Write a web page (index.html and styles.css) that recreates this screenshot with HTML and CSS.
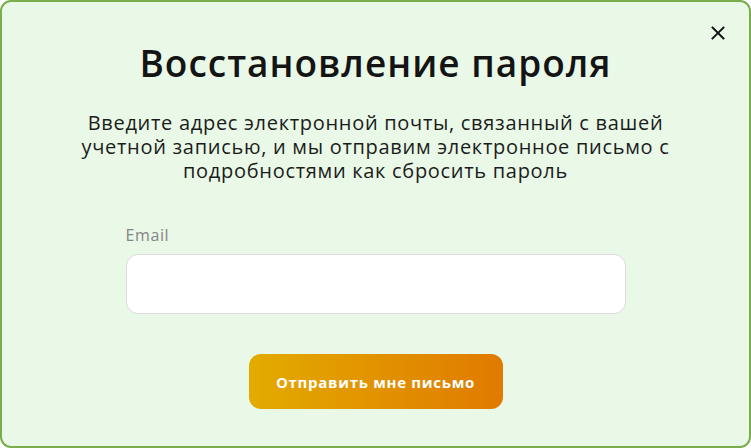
FILE: index.html
```html
<!DOCTYPE html>
<html lang="ru">
<head>
<meta charset="utf-8">
<link rel="stylesheet" href="styles.css">
</head>
<body>
<div class="modal">
  <button class="close" aria-label="Закрыть">
    <svg width="14" height="14" viewBox="0 0 14 14"><path d="M1.5 1.5L12.5 12.5M12.5 1.5L1.5 12.5" stroke="#111" stroke-width="1.9" stroke-linecap="square"/></svg>
  </button>
  <h1 class="title">Восстановление пароля</h1>
  <p class="desc">Введите адрес электронной почты, связанный с вашей учетной записью, и мы отправим электронное письмо с подробностями как сбросить пароль</p>
  <div class="field">
    <label class="label">Email</label>
    <div class="input"></div>
  </div>
  <button class="submit">Отправить мне письмо</button>
</div>
</body>
</html>
```
FILE: styles.css
```css
* { box-sizing: border-box; }
html, body { margin: 0; padding: 0; }
body { font-family: "Open Sans", "Noto Sans", sans-serif; }
.modal {
  position: relative;
  width: 751px;
  height: 448px;
  background: #e9f8e7;
  border: 2px solid #7aad4c;
  border-radius: 11px;
  display: flex;
  flex-direction: column;
  align-items: center;
}
.close {
  position: absolute;
  top: 24px;
  right: 24px;
  padding: 0;
  border: 0;
  background: none;
  width: 14px;
  height: 14px;
  display: flex;
}
.title {
  margin: 37px 0 0;
  font-size: 37px;
  line-height: 48px;
  letter-spacing: 1px;
  font-weight: 600;
  color: #141414;
}
.desc {
  margin: 24px 0 0;
  width: 610px;
  text-align: center;
  font-size: 20px;
  line-height: 24px;
  letter-spacing: 0.7px;
  color: #1c1c1c;
}
.field {
  margin-top: 42px;
  width: 500px;
  display: flex;
  flex-direction: column;
}
.label {
  font-size: 16px;
  line-height: 20px;
  letter-spacing: 0.6px;
  font-weight: 400;
  color: #858585;
}
.input {
  margin-top: 9px;
  height: 60px;
  background: #fff;
  border: 1px solid #dcdcdc;
  border-radius: 12px;
}
.submit {
  margin-top: 40px;
  width: 254px;
  height: 55px;
  border: 0;
  border-radius: 12px;
  background: linear-gradient(90deg, #e3ab00, #e07a00);
  color: #fff;
  font-family: inherit;
  font-size: 15px;
  letter-spacing: 0.7px;
  font-weight: 700;
}
```
